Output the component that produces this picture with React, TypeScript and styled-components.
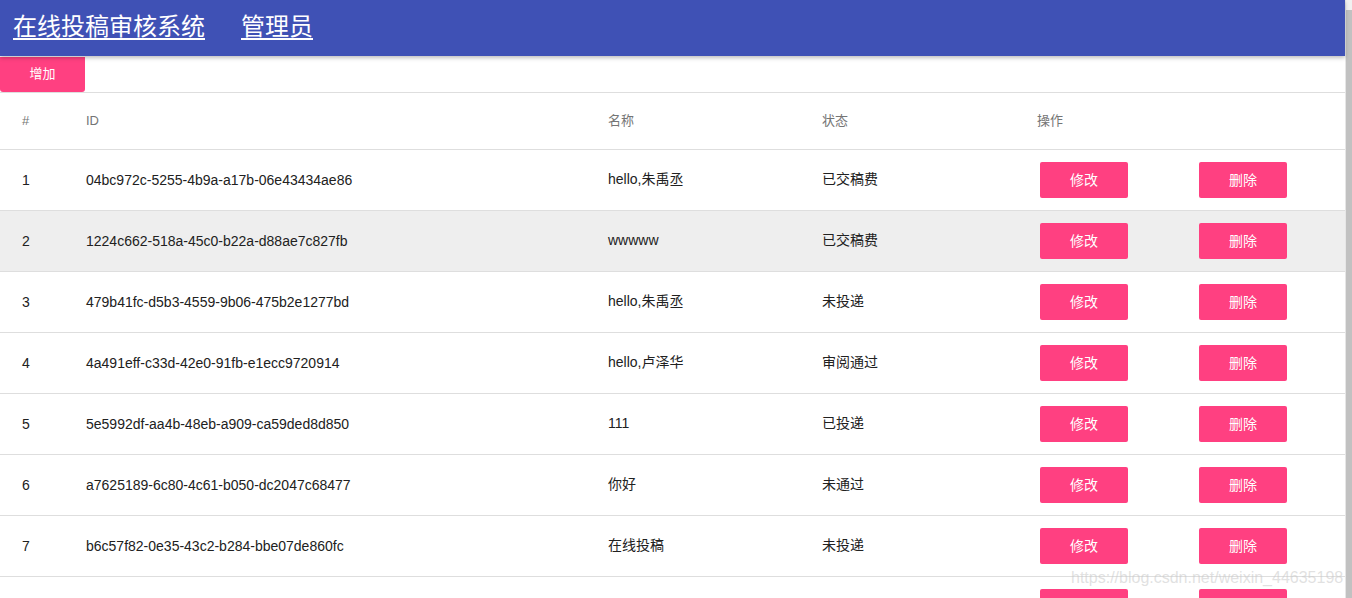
import styled, { createGlobalStyle } from "styled-components";

const GlobalStyle = createGlobalStyle`
  html, body {
    margin: 0;
    padding: 0;
    background: #fff;
    overflow: hidden;
  }
  body {
    font-family: Arial, "Liberation Sans", "Noto Sans CJK SC", sans-serif;
  }
`;

const Page = styled.div`
  display: flex;
  width: 1352px;
  height: 598px;
  overflow: hidden;
  position: relative;
`;

const Main = styled.div`
  width: 1346px;
  border-right: 1px solid #e6e6e6;
  box-sizing: border-box;
`;

const ScrollTrack = styled.div`
  flex: 1;
  background: #f1f1f1;
  padding-top: 10px;
  display: flex;
`;

const ScrollThumb = styled.div`
  flex: 1;
  background: #c1c1c1;
`;

const AppBar = styled.header`
  position: relative;
  z-index: 2;
  height: 56px;
  background: #3f51b5;
  display: flex;
  align-items: center;
  padding-left: 13px;
  gap: 36px;
  box-shadow: 0 2px 4px rgba(0, 0, 0, 0.25);
`;

const BarLink = styled.a`
  color: #fff;
  font-family: "Microsoft YaHei", "Noto Sans CJK SC", sans-serif;
  font-size: 24px;
  text-decoration: underline;
  text-decoration-thickness: 2px;
  text-underline-offset: 3px;
  line-height: 1;
  margin-top: -6px;
`;

const Toolbar = styled.div`
  height: 35px;
  border-bottom: 1px solid #dedede;
  margin-top: 1px;
  display: flex;
`;

const AddButton = styled.button`
  width: 85px;
  height: 35px;
  border: none;
  border-radius: 0 0 3px 3px;
  background: #ff4081;
  color: #fff;
  font-family: "Noto Sans CJK SC", sans-serif;
  font-size: 13px;
  padding: 0 0 4px;
`;

const Row = styled.div<{ $head?: boolean; $shade?: boolean }>`
  display: grid;
  grid-template-columns: 86px 522px 214px 215px 159px 1fr;
  align-items: center;
  box-sizing: border-box;
  height: ${(p) => (p.$head ? "57px" : "61px")};
  padding-bottom: ${(p) => (p.$head ? "1px" : "0")};
  border-bottom: 1px solid #dedede;
  background: ${(p) => (p.$shade ? "#eeeeee" : "transparent")};
  font-size: ${(p) => (p.$head ? "13px" : "14px")};
  color: ${(p) => (p.$head ? "#757575" : "#212121")};
  font-family: Arial, "Liberation Sans", "Noto Sans CJK SC", sans-serif;
`;

const Cell = styled.div<{ $first?: boolean }>`
  padding-left: ${(p) => (p.$first ? "22px" : "0")};
  white-space: nowrap;
  line-height: 16px;
`;

const CjkText = styled.span`
  position: relative;
  top: -1px;
`;

const ActionButton = styled.button`
  width: 88px;
  height: 36px;
  margin-left: 3px;
  border: none;
  border-radius: 2px;
  background: #ff4081;
  color: #fff;
  font-family: "Noto Sans CJK SC", sans-serif;
  font-size: 14px;
  padding: 0 0 3px;
`;

const Watermark = styled.div`
  position: absolute;
  left: 1071px;
  top: 569px;
  font-family: Arial, "Liberation Sans", sans-serif;
  font-size: 16px;
  color: rgba(200, 200, 200, 0.55);
  pointer-events: none;
`;

const rows = [
  ["04bc972c-5255-4b9a-a17b-06e43434ae86", "hello,朱禹丞", "已交稿费"],
  ["1224c662-518a-45c0-b22a-d88ae7c827fb", "wwwww", "已交稿费"],
  ["479b41fc-d5b3-4559-9b06-475b2e1277bd", "hello,朱禹丞", "未投递"],
  ["4a491eff-c33d-42e0-91fb-e1ecc9720914", "hello,卢泽华", "审阅通过"],
  ["5e5992df-aa4b-48eb-a909-ca59ded8d850", "111", "已投递"],
  ["a7625189-6c80-4c61-b050-dc2047c68477", "你好", "未通过"],
  ["b6c57f82-0e35-43c2-b284-bbe07de860fc", "在线投稿", "未投递"],
];

const App = () => {
  return (
    <Page>
      <GlobalStyle />
      <Main>
        <AppBar>
          <BarLink>在线投稿审核系统</BarLink>
          <BarLink>管理员</BarLink>
        </AppBar>

        <Toolbar>
          <AddButton>增加</AddButton>
        </Toolbar>

        {/* table header */}
        <Row $head>
          <Cell $first>#</Cell>
          <Cell>ID</Cell>
          <Cell>名称</Cell>
          <Cell>状态</Cell>
          <Cell>操作</Cell>
          <Cell />
        </Row>

        {rows.map((item, i) => (
          <Row key={item[0]} $shade={i === 1}>
            <Cell $first>{i + 1}</Cell>
            <Cell>{item[0]}</Cell>
            <Cell>
              <CjkText>{item[1]}</CjkText>
            </Cell>
            <Cell>
              <CjkText>{item[2]}</CjkText>
            </Cell>
            <Cell>
              <ActionButton>修改</ActionButton>
            </Cell>
            <Cell>
              <ActionButton>删除</ActionButton>
            </Cell>
          </Row>
        ))}

        {/* next row, only its buttons' tops are in view */}
        <Row>
          <Cell $first />
          <Cell />
          <Cell />
          <Cell />
          <Cell>
            <ActionButton aria-label="修改" />
          </Cell>
          <Cell>
            <ActionButton aria-label="删除" />
          </Cell>
        </Row>
      </Main>
      <ScrollTrack>
        <ScrollThumb />
      </ScrollTrack>
      <Watermark>https://blog.csdn.net/weixin_44635198</Watermark>
    </Page>
  );
};

export default App;
